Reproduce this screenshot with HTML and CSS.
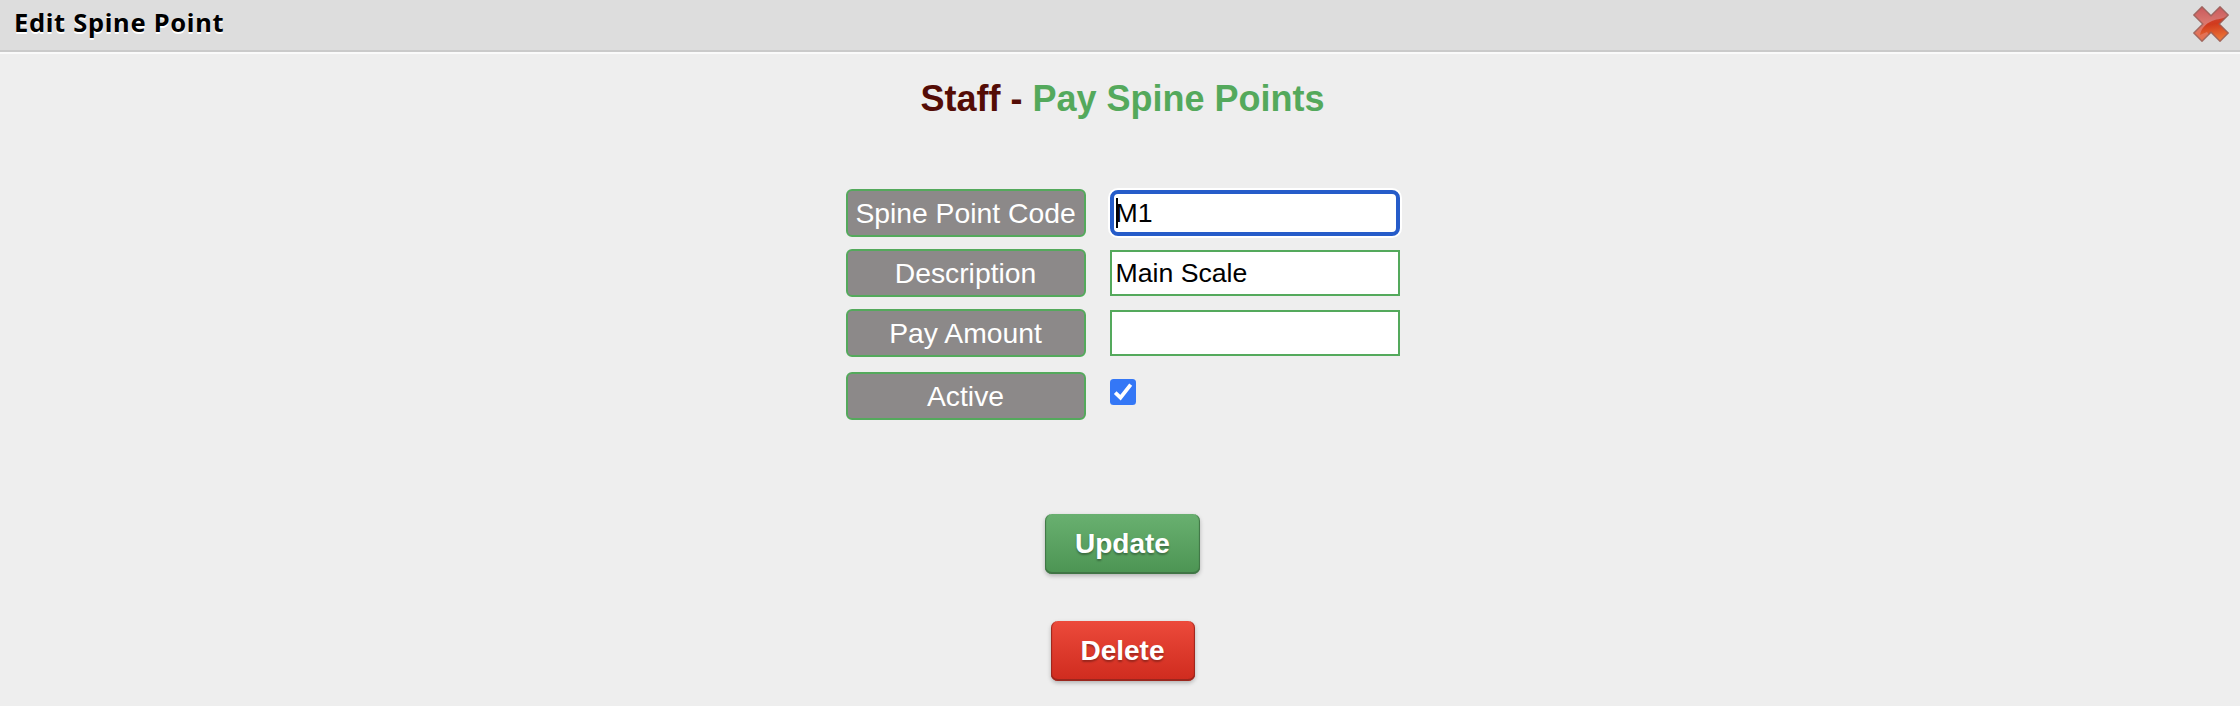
FILE: index.html
```html
<!DOCTYPE html>
<html lang="en">
<head>
<meta charset="utf-8">
<title>Edit Spine Point</title>
<link rel="stylesheet" href="styles.css">
</head>
<body>
<header class="titlebar">
  <span class="titlebar-text">Edit Spine Point</span>
  <svg class="close" width="38" height="38" viewBox="0 0 38 38" role="img" aria-label="Close">
    <defs>
      <linearGradient id="cross" x1="0" y1="0" x2="0" y2="1">
        <stop offset="0" stop-color="#c9595c"/>
        <stop offset="0.45" stop-color="#d9776f"/>
        <stop offset="1" stop-color="#e8704a"/>
      </linearGradient>
      <linearGradient id="shade" x1="0" y1="0" x2="0.15" y2="1">
        <stop offset="0" stop-color="#cc4a40"/>
        <stop offset="0.4" stop-color="#d13a1d"/>
        <stop offset="1" stop-color="#ee7c3a"/>
      </linearGradient>
      <clipPath id="cross-clip"><path d="M10 1.5 19 10.5 28 1.5 36.5 10 27.5 19 36.5 28 28 36.5 19 27.5 10 36.5 1.5 28 10.5 19 1.5 10Z"/></clipPath>
    </defs>
    <path d="M10 1.5 19 10.5 28 1.5 36.5 10 27.5 19 36.5 28 28 36.5 19 27.5 10 36.5 1.5 28 10.5 19 1.5 10Z" fill="url(#cross)"/>
    <path clip-path="url(#cross-clip)" d="M38 9C32 15 26 13 20 16 13 19 9 24 8 30L15 27 22 38 38 38Z" fill="url(#shade)"/>
    <path d="M10 1.8 19 10.8 28 1.8 36.2 10 27.2 19 36.2 28 28 36.2 19 27.2 10 36.2 1.8 28 10.8 19 1.8 10Z" fill="none" stroke="#96605a" stroke-width="1.6" stroke-linejoin="round" opacity=".8"/>
  </svg>
</header>
<main class="content">
  <h1 class="heading"><span class="heading-area">Staff - </span>Pay Spine Points</h1>
  <form class="form">
    <div class="row"><label class="label" for="code">Spine Point Code</label><div class="field focused"><span class="caret"></span><input class="input" id="code" type="text" value="M1"></div></div>
    <div class="row"><label class="label" for="desc">Description</label><div class="field"><input class="input" id="desc" type="text" value="Main Scale"></div></div>
    <div class="row"><label class="label" for="amount">Pay Amount</label><div class="field"><input class="input" id="amount" type="text" value=""></div></div>
    <div class="row row-check"><label class="label">Active</label>
      <svg class="check" width="26" height="26" viewBox="0 0 26 26" role="img" aria-label="Checked"><rect width="26" height="26" rx="3.5" fill="#3477f6"/><path d="M5.2 13.6 10.5 18.6 20.7 5.6" fill="none" stroke="#fff" stroke-width="3.8"/></svg>
    </div>
  </form>
  <div class="actions">
    <button class="button update" type="button">Update</button>
    <button class="button delete" type="button">Delete</button>
  </div>
</main>
</body>
</html>
```
FILE: styles.css
```css
* { box-sizing: border-box; }

body {
  margin: 0;
  height: 706px;
  overflow: hidden;
  background: #eee;
  font-family: "Liberation Sans", Arial, sans-serif;
}

.titlebar {
  display: flex;
  justify-content: space-between;
  height: 52px;
  padding: 5px 10px 0 14px;
  background: #ddd;
  border-bottom: 2px solid #cacaca;
  box-shadow: 0 2px 0 #fafafa;
}

.titlebar-text {
  font: bold 25.5px/34px "Noto Sans", sans-serif;
  letter-spacing: 0.7px;
  color: #000;
  text-shadow: 0 2px 0 #fff;
}

.close { display: block; }

.content {
  display: flex;
  flex-direction: column;
  align-items: center;
  padding: 26px 0 0 5px;
}

.heading {
  margin: 0;
  font-size: 36px;
  line-height: 42px;
  font-weight: bold;
  color: #54a95c;
  white-space: pre;
}

.heading-area { color: #540c06; }

.form {
  display: flex;
  flex-direction: column;
  gap: 12px;
  margin-top: 69px;
}

.row {
  display: flex;
  align-items: center;
  gap: 24px;
}

.row-check {
  align-items: flex-start;
  margin-top: 3px;
}

.label {
  width: 240px;
  height: 48px;
  border: 2px solid #54a95c;
  border-radius: 6px;
  background: #8c8989;
  color: #fff;
  font-size: 28.3px;
  line-height: 45px;
  text-align: center;
  white-space: nowrap;
}

.field {
  position: relative;
  display: flex;
  width: 290px;
  height: 46px;
  border: 2px solid #54a95c;
  background: #fff;
}

.input {
  width: 100%;
  height: 42px;
  padding: 0 0 0 4px;
  border: 0;
  outline: 0;
  background: transparent;
  color: #000;
  font: 26.67px/42px "Liberation Sans", Arial, sans-serif;
}

.focused {
  border: 4px solid #265cc9;
  border-radius: 8px;
  box-shadow: 0 0 0 2px #fff;
}

.focused .input {
  height: 38px;
  padding-left: 2px;
  line-height: 37px;
}

.caret {
  position: absolute;
  left: 2px;
  top: 4px;
  width: 2px;
  height: 30px;
  background: #000;
}

.check { margin-top: 7px; }

.actions {
  display: flex;
  flex-direction: column;
  align-items: center;
  gap: 47px;
  margin-top: 94px;
}

.button {
  height: 60px;
  padding: 0 0 1px;
  border: 0;
  border-radius: 7px;
  color: #fff;
  font: bold 28px/56px "Liberation Sans", Arial, sans-serif;
  text-shadow: 0 2px 2px rgba(0, 0, 0, .3);
}

.update {
  width: 155px;
  background: linear-gradient(#69b070, #4c9453);
  box-shadow: inset 0 -2px 0 #407545, inset 2px 0 1px -1px #407545, inset -2px 0 1px -1px #407545, 0 2px 4px rgba(0, 0, 0, .25);
}

.delete {
  width: 144px;
  background: linear-gradient(#ec4a3b, #cf2b1e);
  box-shadow: inset 0 -2px 0 #9b261d, inset 2px 0 1px -1px #9b261d, inset -2px 0 1px -1px #9b261d, 0 2px 4px rgba(0, 0, 0, .25);
}
```
